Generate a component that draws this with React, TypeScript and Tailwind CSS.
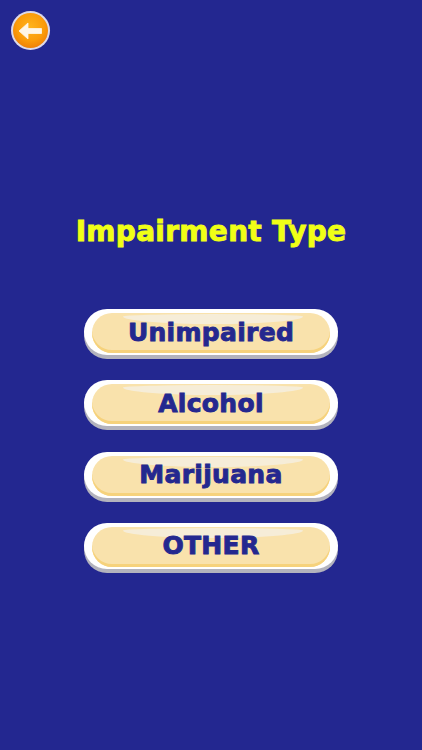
const items = ['Unimpaired', 'Alcohol', 'Marijuana', 'OTHER'];

const BackButton = () => {
  return (
    <button className="w-[39px] h-[39px] rounded-full bg-[#dcd9ea] p-[2px] block">
      <span className="w-full h-full rounded-full flex items-center justify-center bg-[radial-gradient(circle_at_50%_40%,#ffb31a_0%,#fb9c0a_50%,#e56a05_100%)]">
        <svg width="25" height="18" viewBox="0 0 25 18">
          <path d="M1 9 L10 1 L10 6.5 L23.5 6.5 L23.5 11.5 L10 11.5 L10 17 Z" fill="#fff6e6" stroke="#fff6e6" strokeWidth="0.8" strokeLinejoin="round" />
        </svg>
      </span>
    </button>
  );
};

const ChoiceButton = ({ label }: { label: string }) => {
  return (
    <button className="block w-[254px] h-[46px] rounded-[24px] bg-white shadow-[0_4px_0_#b3b3bd] pt-[4px] px-[8px] pb-[2px]">
      <span className="relative block w-full h-full rounded-[20px] bg-[#f9e2ac] shadow-[inset_0_-3px_0_#f6d27c] overflow-hidden">
        <span className="absolute left-[31px] right-[27px] top-[1px] h-[10px] rounded-[50%_50%_50%_50%/25%_25%_75%_75%] bg-[#f6edd8]" />
        <span className="relative flex h-full items-center justify-center pb-[2px] text-[25px] leading-none font-bold tracking-[0.3px] text-[#24288f] [-webkit-text-stroke:0.9px_#24288f] font-['DejaVu_Sans',sans-serif]">
          {label}
        </span>
      </span>
    </button>
  );
};

const App = () => {
  return (
    <div className="w-[422px] h-[750px] bg-[#232790] overflow-hidden px-[11px] pt-[11px]">
      <BackButton />
      <h1 className="mt-[165px] h-[34px] flex items-center justify-center text-[28px] leading-none font-bold tracking-[0.3px] text-[#f0ff16] [-webkit-text-stroke:0.9px_#f0ff16] font-['DejaVu_Sans',sans-serif]">
        Impairment Type
      </h1>
      <div className="mt-[60px] flex flex-col items-center gap-[25.33px]">
        {items.map((item) => (
          <ChoiceButton key={item} label={item} />
        ))}
      </div>
    </div>
  );
};

export default App;
